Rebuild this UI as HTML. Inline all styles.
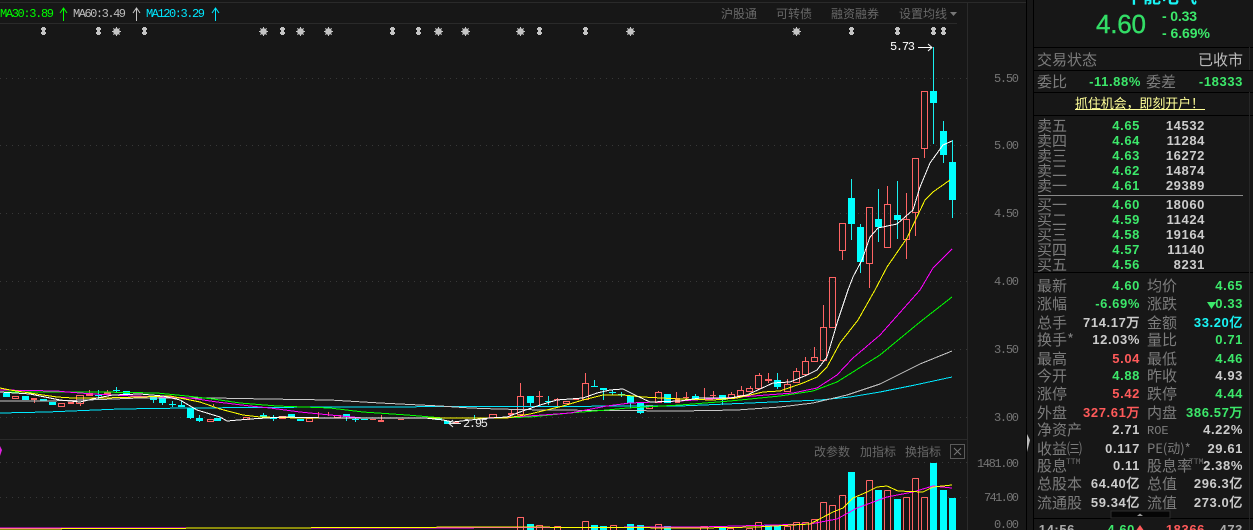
<!DOCTYPE html>
<html><head><meta charset="utf-8"><style>
html,body{margin:0;padding:0;background:#171717;width:1253px;height:530px;overflow:hidden}
svg{display:block}
text{font-family:"Liberation Sans","WenQuanYi Zen Hei","Noto Sans CJK SC",sans-serif;font-size:13px}
.n{font-family:"Liberation Sans",sans-serif;font-weight:bold;font-size:13px;letter-spacing:.6px;text-anchor:end}
.l{font-family:"WenQuanYi Zen Hei","Noto Sans CJK SC",sans-serif;font-size:15px;fill:#7c7c7c}
.a{font-family:"Liberation Mono",monospace;font-size:12px;fill:#757575}
.m{font-family:"Liberation Mono",monospace;font-size:12px}
.t{font-family:"WenQuanYi Zen Hei","Noto Sans CJK SC",sans-serif;font-size:12px;fill:#686868}
.g{fill:#3ce86a}.w{fill:#cccccc}.r{fill:#ff5a5a}.c{fill:#19f5f5}
</style></head><body>
<svg width="1253" height="530" viewBox="0 0 1253 530" xmlns="http://www.w3.org/2000/svg">
<rect width="1253" height="530" fill="#171717"/>

<!-- frame lines -->
<g shape-rendering="crispEdges" fill="none">
<path d="M0 2.5H1026M0 23.5H957M0 439.5H967M967.5 2V530" stroke="#2a2a2a"/>
<path d="M1026.5 0V530M1033.5 0V530" stroke="#000"/>
<path d="M1033 47.5H1253M1033 70.5H1253M1033 92.5H1253M1033 115.5H1253M1033 272.5H1253M1033 518.5H1253" stroke="#000"/>
<path d="M1249.5 47V70M1249.5 92V530" stroke="#262626"/>
<path d="M1038 195.5H1243" stroke="#8a8a8a"/>
<g stroke="#383838" stroke-dasharray="1 5">
<path d="M0 78.5H967M0 145.5H967M0 213.5H967M0 281.5H967M0 349.5H967M0 417.5H967M0 462.5H967M0 497.5H967"/>
</g>
</g>
<rect x="1111" y="511" width="59" height="7" fill="#050505" stroke="#2e2e2e"/>
<path d="M1137 516l3-2.500 3 2.500z" fill="#999"/>
<path d="M1027 434l3 6-3 12z" fill="#bbb"/>
<path d="M0 446l2 4-2 6z" fill="#e020e0"/>

<!-- top bar -->
<text class="m" x="0" y="17" fill="#00ff00" textLength="54">MA30:3.89</text>
<text class="m" x="73" y="17" fill="#bdbdbd" textLength="53">MA60:3.49</text>
<text class="m" x="146" y="17" fill="#00e8ff" textLength="59">MA120:3.29</text>
<path d="M63.500 21V8M60 13l3.500-5 3.500 5" stroke="#00ff00" fill="none"/>
<path d="M136.500 21V8M133 13l3.500-5 3.500 5" stroke="#c8c8c8" fill="none"/>
<path d="M215.500 21V8M212 13l3.500-5 3.500 5" stroke="#00e8ff" fill="none"/>
<text class="t" x="721" y="18">沪股通</text>
<text class="t" x="776" y="18">可转债</text>
<text class="t" x="831" y="18">融资融券</text>
<text class="t" x="899" y="18">设置均线</text>
<path d="M950 12h7l-3.500 4z" fill="#777"/>

<!-- event markers -->
<g fill="#c4c4c4" shape-rendering="crispEdges">
<path d="M42 27h3v1h1v2h-1v2h1v2h-1v1h-3v-1h-1v-2h1v-2h-1v-2h1zM97 27h3v1h1v2h-1v2h1v2h-1v1h-3v-1h-1v-2h1v-2h-1v-2h1zM143 27h3v1h1v2h-1v2h1v2h-1v1h-3v-1h-1v-2h1v-2h-1v-2h1zM281 27h3v1h1v2h-1v2h1v2h-1v1h-3v-1h-1v-2h1v-2h-1v-2h1zM391 27h3v1h1v2h-1v2h1v2h-1v1h-3v-1h-1v-2h1v-2h-1v-2h1zM417 27h3v1h1v2h-1v2h1v2h-1v1h-3v-1h-1v-2h1v-2h-1v-2h1zM538 27h3v1h1v2h-1v2h1v2h-1v1h-3v-1h-1v-2h1v-2h-1v-2h1zM584 27h3v1h1v2h-1v2h1v2h-1v1h-3v-1h-1v-2h1v-2h-1v-2h1zM850 27h3v1h1v2h-1v2h1v2h-1v1h-3v-1h-1v-2h1v-2h-1v-2h1zM896 27h3v1h1v2h-1v2h1v2h-1v1h-3v-1h-1v-2h1v-2h-1v-2h1zM932 27h3v1h1v2h-1v2h1v2h-1v1h-3v-1h-1v-2h1v-2h-1v-2h1zM942 27h3v1h1v2h-1v2h1v2h-1v1h-3v-1h-1v-2h1v-2h-1v-2h1z"/>
</g>
<g fill="#c4c4c4">
<circle cx="116.500" cy="31.500" r="3.300"/><circle cx="263.500" cy="31.500" r="3.300"/><circle cx="300.500" cy="31.500" r="3.300"/><circle cx="328.500" cy="31.500" r="3.300"/><circle cx="438.500" cy="31.500" r="3.300"/><circle cx="465.500" cy="31.500" r="3.300"/><circle cx="520.500" cy="31.500" r="3.300"/><circle cx="630.500" cy="31.500" r="3.300"/><circle cx="796.500" cy="31.500" r="3.300"/>
</g>
<g stroke="#c4c4c4" fill="none">
<path d="M116.500 27V36M112 31.500H121M113.300 28.300L119.700 34.700M119.700 28.300L113.300 34.700"/>
<path d="M263.500 27V36M259 31.500H268M260.300 28.300L266.700 34.700M266.700 28.300L260.300 34.700"/>
<path d="M300.500 27V36M296 31.500H305M297.300 28.300L303.700 34.700M303.700 28.300L297.300 34.700"/>
<path d="M328.500 27V36M324 31.500H333M325.300 28.300L331.700 34.700M331.700 28.300L325.300 34.700"/>
<path d="M438.500 27V36M434 31.500H443M435.300 28.300L441.700 34.700M441.700 28.300L435.300 34.700"/>
<path d="M465.500 27V36M461 31.500H470M462.300 28.300L468.700 34.700M468.700 28.300L462.300 34.700"/>
<path d="M520.500 27V36M516 31.500H525M517.300 28.300L523.700 34.700M523.700 28.300L517.300 34.700"/>
<path d="M630.500 27V36M626 31.500H635M627.300 28.300L633.700 34.700M633.700 28.300L627.300 34.700"/>
<path d="M796.500 27V36M792 31.500H801M793.300 28.300L799.700 34.700M799.700 28.300L793.300 34.700"/>
</g>

<!-- red candles -->
<g shape-rendering="crispEdges" fill="none" stroke="#ff6464">
<path d="M34.500 399V403M80.500 403V406M89.500 390V393M107.500 390V392M213.500 404V406M318.500 412V418M328.500 412V416M381.500 415V422M511.500 410V413M520.500 383V396M539.500 391V406M557.500 398V406M585.500 373V383M658.500 391V392M676.500 392V398M686.500 392V400M704.500 388V400M713.500 391V399M731.500 392V394M741.500 386V390M750.500 386V388M759.500 373V375M768.500 373V383M787.500 379V384M796.500 368V371M805.500 357V361M814.500 347V357M823.500 305V327M842.500 250V260M869.500 263V288M887.500 186V204M906.500 193V219M906.500 239V259M915.500 212V236M924.500 148V158"/>
<path d="M12.500 396.500h6v2h-6zM31.500 398.500h5v1h-5zM58.500 403.500h6v3h-6zM76.500 395.500h7v8h-7zM207.500 419.500h6v2h-6zM243.500 417.500h6v2h-6zM279.500 416.500h6v2h-6zM306.500 418.500h6v3h-6zM334.500 415.500h6v2h-6zM489.500 414.500h7v3h-7zM517.500 396.500h6v18h-6zM563.500 401.500h6v2h-6zM582.500 383.500h6v16h-6zM646.500 405.500h6v3h-6zM655.500 392.500h6v10h-6zM728.500 394.500h6v4h-6zM737.500 390.500h6v5h-6zM746.500 388.500h6v3h-6zM755.500 375.500h6v13h-6zM784.500 384.500h6v7h-6zM793.500 371.500h6v11h-6zM802.500 361.500h6v13h-6zM811.500 357.500h6v4h-6zM820.500 327.500h6v33h-6zM829.500 277.500h6v50h-6zM839.500 223.500h6v27h-6zM866.500 207.500h6v56h-6zM884.500 204.500h6v43h-6zM903.500 219.500h6v20h-6zM912.500 158.500h6v54h-6zM921.500 91.500h6v57h-6z"/>
</g>
<g shape-rendering="crispEdges" fill="#ff6464">
<path d="M68 402h6v2h-6zM86 393h7v3h-7zM104 392h7v3h-7zM370 419h6v1h-6zM378 420h6v2h-6zM398 419h6v1h-6zM453 422h6v2h-6zM508 413h6v2h-6zM536 396h7v1h-7zM554 399h6v1h-6zM573 399h6v1h-6zM675 398h5v5h-5zM683 397h6v1h-6zM701 399h6v1h-6zM710 395h6v1h-6zM765 379h7v2h-7z"/>
</g>

<!-- cyan candles -->
<g shape-rendering="crispEdges" fill="none" stroke="#19f0f0">
<path d="M98.500 390V399M116.500 387V393M172.500 401V407M181.500 401V405M162.500 403V405M190.500 418V419M199.500 415V422M273.500 415V421M263.500 413V415M346.500 417V421M355.500 417V422M474.500 415V419M530.500 403V406M548.500 396V405M594.500 380V387M603.500 390V400M612.500 390V395M621.500 392V397M630.500 403V408M640.500 413V414M722.500 400V405M777.500 373V389M851.500 179V240M860.500 224V273M878.500 189V242M897.500 181V239M933.500 47V144M943.500 121V163M952.500 140V218M153.500 400V403M695.500 394V400"/>
</g>
<g shape-rendering="crispEdges" fill="#00ffff">
<path d="M3 393h7v4h-7zM22 396h7v4h-7zM40 399h7v2h-7zM49 402h7v3h-7zM95 395h7v1h-7zM113 390h7v1h-7zM123 391h7v3h-7zM150 396h7v4h-7zM159 397h7v6h-7zM169 404h7v1h-7zM178 405h7v2h-7zM187 408h7v10h-7zM196 418h7v3h-7zM214 418h7v3h-7zM260 415h7v2h-7zM270 418h7v1h-7zM288 414h7v3h-7zM297 419h7v2h-7zM343 414h7v3h-7zM352 419h7v1h-7zM361 419h7v1h-7zM435 418h7v2h-7zM444 421h7v3h-7zM527 396h7v7h-7zM545 401h7v1h-7zM591 386h7v1h-7zM600 388h7v2h-7zM609 392h7v1h-7zM618 394h7v1h-7zM627 396h7v7h-7zM637 403h7v10h-7zM664 394h7v9h-7zM692 396h7v4h-7zM719 395h7v5h-7zM774 380h7v7h-7zM848 198h7v26h-7zM857 227h7v35h-7zM875 219h7v8h-7zM894 215h7v5h-7zM930 91h7v12h-7zM940 131h7v24h-7zM949 162h7v38h-7z"/>
</g>

<!-- moving averages -->
<g fill="none" stroke-width="1" shape-rendering="crispEdges">
<polyline stroke="#00e8ff" points="0,413 47,412 120,409 187,408 330,407 680,406 773,402 820,400 850,397 880,392 915,385 952,377"/>
<polyline stroke="#c8c8c8" points="0,401 47,401 87,400 140,398 213,398 267,399 330,400 380,403 440,406 470,408 497,409 543,410 680,411 737,410 780,407 813,403 847,395 880,384 920,364 952,351"/>
<polyline stroke="#00ff00" points="0,392 48,392 100,392 157,393 187,396 213,399 240,403 277,406 330,408 363,412 407,415 443,418 497,418 530,417 570,413 607,410 627,408 680,405 730,401 780,396 813,391 837,382 880,355 920,322 952,297"/>
<polyline stroke="#ff00ff" points="0,390 57,391 67,392 93,394 133,396 167,397 190,398 217,402 250,406 270,408 300,412 330,415 363,418 440,418 497,418 543,415 570,413 607,406 630,403 680,401 753,396 793,393 817,388 837,375 853,358 880,335 920,290 933,268 952,249"/>
<polyline stroke="#ffff00" points="0,388 10,390 30,393 43,395 57,397 73,398 103,398 140,397 170,396 200,402 220,409 243,415 260,417 300,418 427,418 507,418 530,414 563,406 583,400 603,395 623,395 643,397 680,399 713,400 737,398 763,392 780,391 803,383 817,377 827,367 840,343 858,320 875,290 887,267 907,238 925,200 933,192 950,180"/>
<polyline stroke="#ffffff" points="0,392 30,394 60,400 80,402 97,398 113,395 140,394 163,396 180,400 197,410 220,417 227,421 250,419 283,417 330,418 363,418 407,418 425,418 443,420 453,422 470,420 490,418 507,417 520,412 540,405 557,400 583,398 597,393 610,390 623,389 637,396 650,402 680,401 700,398 730,398 747,395 773,383 790,382 807,375 817,370 827,357 833,337 838,320 848,290 853,277 862,260 870,237 878,228 897,224 913,210 920,187 930,163 943,145 952,141"/>
</g>

<!-- price annotations -->
<text class="m" x="890" y="50" fill="#fff" textLength="25">5.73</text>
<path d="M918 47.500H932M928 44l4 3.500-4 3.500" stroke="#fff" fill="none"/>
<text class="m" x="463" y="427" fill="#e8e8e8" textLength="25">2.95</text>
<path d="M461 423.500H449M453 420l-4 3.500 4 3.500" stroke="#e8e8e8" fill="none"/>

<!-- axis -->
<text class="a" x="994" y="82" textLength="25">5.50</text>
<text class="a" x="994" y="149" textLength="25">5.00</text>
<text class="a" x="994" y="217" textLength="25">4.50</text>
<text class="a" x="994" y="285" textLength="25">4.00</text>
<text class="a" x="994" y="353" textLength="25">3.50</text>
<text class="a" x="994" y="421" textLength="25">3.00</text>
<text class="a" x="977" y="467" textLength="42">1481.00</text>
<text class="a" x="984" y="501" textLength="35">741.00</text>
<text class="a" x="994" y="528" textLength="25">0.00</text>

<!-- volume panel header -->
<text class="t" x="814" y="456">改参数</text>
<text class="t" x="860" y="456">加指标</text>
<text class="t" x="905" y="456">换指标</text>
<rect x="950.500" y="444.500" width="14" height="14" fill="none" stroke="#5a5a5a"/>
<path d="M954 448l7 7M961 448l-7 7" stroke="#777" fill="none"/>

<!-- volume bars -->
<g shape-rendering="crispEdges" fill="none" stroke="#ff6464">
<path d="M517.500 517.500h6V530M517.500 530V517.500M536.500 525.500h6V530M536.500 530V525.500M554.500 526.500h6V530M554.500 530V526.500M582.500 521.500h6V530M582.500 530V521.500M610.500 525.500h6V530M610.500 530V525.500M655.500 524.500h6V530M655.500 530V524.500M700.500 526.500h7V530M700.500 530V526.500M727.500 528.500h6V530M727.500 530V528.500M746.500 528.500h6V530M746.500 530V528.500M755.500 522.500h6V530M755.500 530V522.500M784.500 526.500h6V530M784.500 530V526.500M793.500 522.500h6V530M793.500 530V522.500M802.500 522.500h6V530M802.500 530V522.500M811.500 519.500h6V530M811.500 530V519.500M820.500 502.500h6V530M820.500 530V502.500M829.500 505.500h6V530M829.500 530V505.500M839.500 495.500h6V530M839.500 530V495.500M866.500 480.500h6V530M866.500 530V480.500M884.500 490.500h6V530M884.500 530V490.500M903.500 497.500h6V530M903.500 530V497.500M912.500 478.500h6V530M912.500 530V478.500M921.500 497.500h6V530M921.500 530V497.500"/>
</g>
<g shape-rendering="crispEdges" fill="#00ffff">
<path d="M527 524h7v6h-7zM591 525h7v5h-7zM600 526h7v4h-7zM627 524h7v6h-7zM637 525h7v5h-7zM664 526h7v4h-7zM719 527h7v3h-7zM765 525h7v5h-7zM774 526h7v4h-7zM848 472h7v58h-7zM857 497h7v33h-7zM875 490h7v40h-7zM894 499h7v31h-7zM930 463h7v67h-7zM940 490h7v40h-7zM949 498h7v32h-7z"/>
</g>
<g fill="none" shape-rendering="crispEdges" stroke-width="1">
<polyline stroke="#ff00ff" points="0,528 400,528 700,527 810,524 837,519 857,508 887,497 913,492 933,486 952,488"/>
<polyline stroke="#ffff00" points="0,529 500,527 700,528 757,527 810,524 833,512 843,508 853,498 867,492 877,487 887,486 898,491 923,492 933,487 952,485"/>
</g>

<!-- right panel -->
<text x="1125" y="3" class="c" style="font-size:18px;font-weight:bold;font-family:'WenQuanYi Zen Hei','Noto Sans CJK SC',sans-serif">中能电气</text>
<text x="1096" y="33" style="font-size:26px;font-family:'Liberation Sans',sans-serif" fill="#33dd66" stroke="#33dd66" stroke-width=".4" textLength="50">4.60</text>
<text x="1162" y="21" style="font-size:14px;font-weight:bold" class="g" textLength="35">- 0.33</text>
<text x="1162" y="38" style="font-size:14px;font-weight:bold" class="g" textLength="48">- 6.69%</text>

<text class="l" x="1037" y="65">交易状态</text>
<text class="l" x="1243" y="65" text-anchor="end" style="fill:#bcbcbc">已收市</text>
<text class="l" x="1037" y="87">委比</text>
<text class="n g" x="1141" y="86">-11.88%</text>
<text class="l" x="1146" y="87">委差</text>
<text class="n g" x="1243" y="86">-18333</text>
<text x="1075" y="108" fill="#ffff99" style="font-family:'WenQuanYi Zen Hei','Noto Sans CJK SC',sans-serif;font-size:13px" textLength="129">抓住机会，即刻开户！</text>
<path d="M1075 109.500H1205" stroke="#ffff99"/>

<text class="l" x="1037" y="131">卖五</text><text class="n g" x="1140" y="130">4.65</text><text class="n w" x="1205" y="130">14532</text>
<text class="l" x="1037" y="146">卖四</text><text class="n g" x="1140" y="145">4.64</text><text class="n w" x="1205" y="145">11284</text>
<text class="l" x="1037" y="161">卖三</text><text class="n g" x="1140" y="160">4.63</text><text class="n w" x="1205" y="160">16272</text>
<text class="l" x="1037" y="176">卖二</text><text class="n g" x="1140" y="175">4.62</text><text class="n w" x="1205" y="175">14874</text>
<text class="l" x="1037" y="191">卖一</text><text class="n g" x="1140" y="190">4.61</text><text class="n w" x="1205" y="190">29389</text>
<text class="l" x="1037" y="210">买一</text><text class="n g" x="1140" y="209">4.60</text><text class="n w" x="1205" y="209">18060</text>
<text class="l" x="1037" y="225">买二</text><text class="n g" x="1140" y="224">4.59</text><text class="n w" x="1205" y="224">11424</text>
<text class="l" x="1037" y="240">买三</text><text class="n g" x="1140" y="239">4.58</text><text class="n w" x="1205" y="239">19164</text>
<text class="l" x="1037" y="255">买四</text><text class="n g" x="1140" y="254">4.57</text><text class="n w" x="1205" y="254">11140</text>
<text class="l" x="1037" y="270">买五</text><text class="n g" x="1140" y="269">4.56</text><text class="n w" x="1205" y="269">8231</text>

<text class="l" x="1037" y="291">最新</text><text class="n g" x="1140" y="290">4.60</text><text class="l" x="1147" y="291">均价</text><text class="n g" x="1243" y="290">4.65</text>
<text class="l" x="1037" y="309">涨幅</text><text class="n g" x="1140" y="308">-6.69%</text><text class="l" x="1147" y="309">涨跌</text><text class="n g" x="1243" y="308">0.33</text><path d="M1207 302h9l-4.500 7z" fill="#3ce86a"/>
<text class="l" x="1037" y="328">总手</text><text class="n w" x="1140" y="327">714.17万</text><text class="l" x="1147" y="328">金额</text><text class="n c" x="1243" y="327">33.20亿</text>
<text class="l" x="1037" y="345">换手*</text><text class="n w" x="1140" y="344">12.03%</text><text class="l" x="1147" y="345">量比</text><text class="n g" x="1243" y="344">0.71</text>
<text class="l" x="1037" y="364">最高</text><text class="n r" x="1140" y="363">5.04</text><text class="l" x="1147" y="364">最低</text><text class="n g" x="1243" y="363">4.46</text>
<text class="l" x="1037" y="381">今开</text><text class="n g" x="1140" y="380">4.88</text><text class="l" x="1147" y="381">昨收</text><text class="n w" x="1243" y="380">4.93</text>
<text class="l" x="1037" y="399">涨停</text><text class="n r" x="1140" y="398">5.42</text><text class="l" x="1147" y="399">跌停</text><text class="n g" x="1243" y="398">4.44</text>
<text class="l" x="1037" y="418">外盘</text><text class="n r" x="1140" y="417">327.61万</text><text class="l" x="1147" y="418">内盘</text><text class="n g" x="1243" y="417">386.57万</text>
<text class="l" x="1037" y="435">净资产</text><text class="n w" x="1140" y="434">2.71</text><text class="l" x="1147" y="434" style="font-size:12px;font-family:'Liberation Mono',monospace">ROE</text><text class="n w" x="1243" y="434">4.22%</text>
<text class="l" x="1037" y="454">收益㈢</text><text class="n w" x="1140" y="453">0.117</text><text class="l" x="1147" y="453" style="font-size:13px">PE(动)*</text><text class="n w" x="1243" y="453">29.61</text>
<text class="l" x="1037" y="471">股息</text><text x="1066" y="464" fill="#6f6f6f" style="font-size:8px;font-family:'Liberation Mono',monospace">TTM</text><text class="n w" x="1140" y="470">0.11</text><text class="l" x="1147" y="471">股息率</text><text x="1189" y="464" fill="#6f6f6f" style="font-size:8px;font-family:'Liberation Mono',monospace">TTM</text><text class="n w" x="1243" y="470">2.38%</text>
<text class="l" x="1037" y="489">总股本</text><text class="n w" x="1140" y="488">64.40亿</text><text class="l" x="1147" y="489">总值</text><text class="n w" x="1243" y="488">296.3亿</text>
<text class="l" x="1037" y="508">流通股</text><text class="n w" x="1140" y="507">59.34亿</text><text class="l" x="1147" y="508">流值</text><text class="n w" x="1243" y="507">273.0亿</text>

<text class="n" x="1075" y="534" style="fill:#aaaaaa">14:56</text>
<text class="n g" x="1135" y="534">4.60</text>
<path d="M1140 530l-3.500 0 3.500-5 3.500 5-2 0v4h-3z" fill="#ff5a5a"/>
<text class="n r" x="1205" y="534">18366</text>
<text class="n" x="1243" y="534" style="fill:#aaaaaa">473</text>
</svg>
</body></html>
